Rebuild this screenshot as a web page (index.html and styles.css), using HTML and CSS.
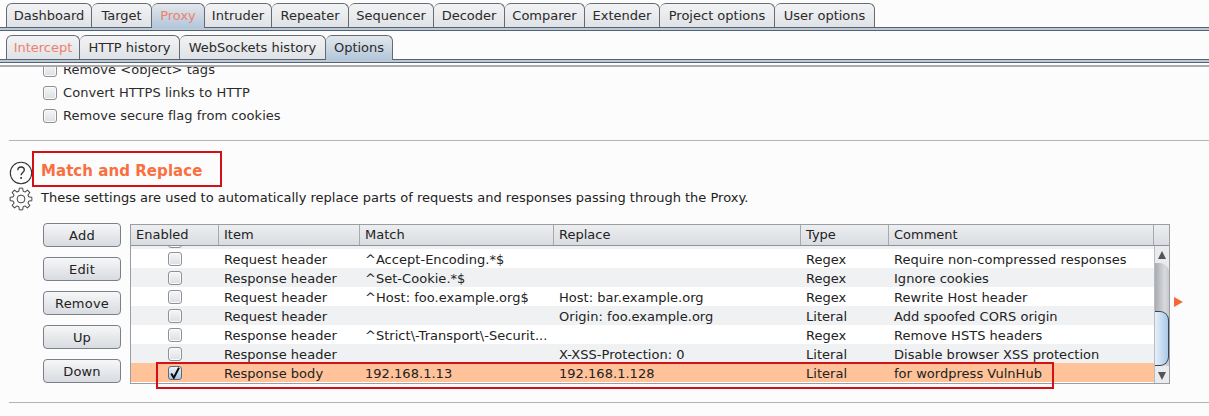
FILE: index.html
```html
<!DOCTYPE html>
<html lang="en">
<head>
<meta charset="utf-8">
<title>Burp Proxy Options</title>
<link rel="stylesheet" href="styles.css">
</head>
<body>
<div class="app">
  <nav class="tabbar top">
    <span class="tab w-dash">Dashboard</span><span class="tab w-target">Target</span><span class="tab active hot w-proxy">Proxy</span><span class="tab w-intr">Intruder</span><span class="tab w-rep">Repeater</span><span class="tab w-seq">Sequencer</span><span class="tab w-dec">Decoder</span><span class="tab w-comp">Comparer</span><span class="tab w-ext">Extender</span><span class="tab w-proj">Project options</span><span class="tab w-user">User options</span>
  </nav>
  <nav class="tabbar sub">
    <span class="tab hot w-int">Intercept</span><span class="tab w-http">HTTP history</span><span class="tab w-ws">WebSockets history</span><span class="tab active w-opt">Options</span>
  </nav>
  <main class="content">
    <div class="checks">
      <label class="check-row clipped"><span class="cb"></span>Remove &lt;object&gt; tags</label>
      <label class="check-row"><span class="cb"></span>Convert HTTPS links to HTTP</label>
      <label class="check-row"><span class="cb"></span>Remove secure flag from cookies</label>
    </div>
    <hr class="rule first">
    <section class="section">
      <div class="icons">
        <svg class="help" width="24" height="24" viewBox="0 0 24 24"><circle cx="12" cy="12" r="10.700" fill="none" stroke="#333" stroke-width="1.100"/><path d="M8.800 9.200c0-2 1.400-3.200 3.300-3.200s3.200 1.200 3.200 2.900c0 2.500-3.200 2.500-3.200 5.300" fill="none" stroke="#333" stroke-width="1.300"/><rect x="11.300" y="16" width="1.600" height="1.900" fill="#333"/></svg>
        <svg class="gear" width="24" height="24" viewBox="0 0 24 24">
          <defs><path id="tooth" d="M9.930 4.270L10.280 1.140H13.720L14.070 4.270A8 8 0 0 1 16 5.070" fill="none" stroke="#444" stroke-width="1" stroke-linejoin="round"/></defs>
          <use href="#tooth"/><use href="#tooth" transform="rotate(45 12 12)"/><use href="#tooth" transform="rotate(90 12 12)"/><use href="#tooth" transform="rotate(135 12 12)"/><use href="#tooth" transform="rotate(180 12 12)"/><use href="#tooth" transform="rotate(225 12 12)"/><use href="#tooth" transform="rotate(270 12 12)"/><use href="#tooth" transform="rotate(315 12 12)"/>
          <circle cx="12" cy="12" r="3.900" fill="none" stroke="#444" stroke-width="1"/>
        </svg>
      </div>
      <div class="section-body">
        <h2 class="title">Match and Replace</h2>
        <p class="desc">These settings are used to automatically replace parts of requests and responses passing through the Proxy.</p>
      </div>
    </section>
    <div class="editor">
      <div class="buttons">
        <button class="btn">Add</button>
        <button class="btn">Edit</button>
        <button class="btn">Remove</button>
        <button class="btn">Up</button>
        <button class="btn">Down</button>
      </div>
      <div class="table">
        <div class="grid head">
          <span>Enabled</span><span>Item</span><span>Match</span><span>Replace</span><span>Type</span><span>Comment</span><span class="corner"></span>
        </div>
        <div class="table-body">
          <div class="rows">
            <div class="sliver"><span class="cb sliver-cb"></span></div>
            <div class="grid row"><span class="cell-cb"><span class="cb"></span></span><span>Request header</span><span>^Accept-Encoding.*$</span><span></span><span>Regex</span><span>Require non-compressed responses</span></div>
            <div class="grid row alt"><span class="cell-cb"><span class="cb"></span></span><span>Response header</span><span>^Set-Cookie.*$</span><span></span><span>Regex</span><span>Ignore cookies</span></div>
            <div class="grid row"><span class="cell-cb"><span class="cb"></span></span><span>Request header</span><span>^Host: foo.example.org$</span><span>Host: bar.example.org</span><span>Regex</span><span>Rewrite Host header</span></div>
            <div class="grid row alt"><span class="cell-cb"><span class="cb"></span></span><span>Request header</span><span></span><span>Origin: foo.example.org</span><span>Literal</span><span>Add spoofed CORS origin</span></div>
            <div class="grid row"><span class="cell-cb"><span class="cb"></span></span><span>Response header</span><span>^Strict\-Transport\-Securit...</span><span></span><span>Regex</span><span>Remove HSTS headers</span></div>
            <div class="grid row alt"><span class="cell-cb"><span class="cb"></span></span><span>Response header</span><span></span><span>X-XSS-Protection: 0</span><span>Literal</span><span>Disable browser XSS protection</span></div>
            <div class="grid row selected"><span class="cell-cb"><span class="cb on"><svg class="tick" width="12" height="12" viewBox="0 0 12 12"><path d="M2.200 6.500L4.800 10.800L10 .8" fill="none" stroke="#0c0c0c" stroke-width="2"/></svg></span></span><span>Response body</span><span>192.168.1.13</span><span>192.168.1.128</span><span>Literal</span><span>for wordpress VulnHub</span></div>
          </div>
          <div class="scrollbar">
            <span class="arrow up"></span>
            <span class="track"><span class="thumb"></span></span>
            <span class="arrow down"></span>
          </div>
        </div>
      </div>
      <span class="expander"></span>
    </div>
    <hr class="rule last">
  </main>
  <div class="mark mark-title"></div>
  <div class="mark mark-row"></div>
</div>
</body>
</html>
```
FILE: styles.css
```css
* { box-sizing: border-box; }
html, body { margin: 0; padding: 0; }
body { background: #fcfcfc; font-family: "DejaVu Sans", sans-serif; font-size: 13px; color: #222; }
.app { position: relative; width: 1209px; height: 416px; overflow: hidden; }

.tabbar { display: flex; padding-left: 6px; background: #fcfcfc; border-bottom: 4px solid #b8c9db; position: relative; }
.tabbar::before { content: ""; position: absolute; left: 0; right: 0; bottom: -1px; height: 1px; background: #59616b; }
.tabbar::after { content: ""; position: absolute; left: 0; right: 0; bottom: -4px; height: 1px; background: #59616b; }
.tabbar.top { height: 31px; padding-top: 3px; }
.tabbar.sub { height: 32px; padding-top: 4px; }
.tab { display: flex; align-items: center; justify-content: center; height: 24px; flex: none; border: 1px solid #666b72; border-bottom: 0; border-left-width: 0; border-radius: 6px 6px 0 0; background: linear-gradient(#f2f3f5, #dfe2e6); color: #2a2a2a; position: relative; z-index: 1; }
.tab:first-child { border-left-width: 1px; }
.tab.active { height: 25px; padding-bottom: 1px; background: linear-gradient(#e2e7ec, #b3c6da); }
.tab.hot { color: #f0806c; }
.w-dash { width: 86px; } .w-target { width: 60px; } .w-proxy { width: 53px; } .w-intr { width: 67px; }
.w-rep { width: 77px; } .w-seq { width: 85px; } .w-dec { width: 71px; } .w-comp { width: 80px; }
.w-ext { width: 75px; } .w-proj { width: 115px; } .w-user { width: 100px; }
.w-int { width: 74px; } .w-http { width: 100px; } .w-ws { width: 146px; } .w-opt { width: 67px; }

.content { height: 353px; overflow: hidden; padding-left: 9px; border-top: 2px solid #a9abad; margin-top: 2px; }
.checks { margin-top: -9px; padding-left: 34px; }
.check-row { display: flex; align-items: center; gap: 6px; height: 23px; color: #2b2b2b; letter-spacing: .05px; }
.cb { display: inline-flex; align-items: center; justify-content: center; width: 14px; height: 14px; flex: none; border: 1px solid #8d9095; border-radius: 3px; background: linear-gradient(#f5f6f7, #dcdfe3); box-shadow: inset 0 0 0 1px #fafafa; }
.cb.on { background: linear-gradient(#eef3f8, #a9c8e6); border-color: #5e6a78; box-shadow: none; }
.tick { flex: none; }

.rule { border: 0; height: 1px; background: #b4b4b4; margin: 0; width: 1200px; }
.rule.first { margin-top: 13px; }
.rule.last { margin-top: 18px; }

.section { display: flex; margin-top: 20px; height: 52px; }
.icons { width: 32px; display: flex; flex-direction: column; gap: 2px; flex: none; }
.icons svg { flex: none; }
.title { margin: 0; font-size: 15px; font-weight: bold; color: #f96f3f; letter-spacing: .05px; line-height: 18px; height: 28px; padding-top: 1px; }
.desc { margin: 0; line-height: 18px; color: #222; }

.editor { display: flex; margin-top: 10px; position: relative; }
.buttons { padding-left: 34px; display: flex; flex-direction: column; gap: 10px; flex: none; box-sizing: content-box; width: 78px; padding-right: 9px; }
.btn { width: 78px; height: 24px; margin: 0; border: 1px solid #7c8188; border-radius: 4px; background: linear-gradient(#f6f7f8, #d8dbe0); font: 13px "DejaVu Sans", sans-serif; color: #222; letter-spacing: .2px; padding: 0; flex: none; }

.table { width: 1040px; height: 160px; margin-top: 1px; border: 1px solid #9a9da1; flex: none; }
.grid { display: grid; grid-template-columns: 88px 141px 194px 247px 88px 265px; align-items: center; }
.head { grid-template-columns: 88px 141px 194px 247px 88px 265px 1fr; height: 21px; background: linear-gradient(#eceef0, #d9dce1); border-bottom: 1px solid #8e9196; }
.head span { height: 100%; display: flex; align-items: center; padding-left: 5px; padding-bottom: 2px; border-right: 1px solid #a6a9ae; }
.head .corner { border-right: 0; }
.table-body { display: flex; height: 137px; overflow: hidden; }
.rows { width: 1023px; flex: none; background: #fff; margin-top: -1px; }
.sliver { height: 4px; background: #f0f1f2; overflow: hidden; padding-left: 37px; }
.sliver-cb { display: flex; margin-top: -11px; }
.row { height: 19px; background: #fff; }
.row.alt { background: #f0f1f2; }
.row.selected { background: #ffc299; }
.row span { padding-left: 5px; white-space: nowrap; overflow: hidden; line-height: 19px; height: 19px; padding-top: 1px; letter-spacing: .03px; }
.row .cell-cb { display: flex; justify-content: center; align-items: center; padding: 0; overflow: visible; }
.row .cell-cb .cb { padding: 0; height: 14px; line-height: 1; }

.scrollbar { flex: 1; display: flex; flex-direction: column; background: #e9ebee; border-left: 1px solid #b9bcc0; }
.arrow { height: 17px; flex: none; position: relative; }
.arrow::after { content: ""; position: absolute; left: 3px; border-left: 4px solid transparent; border-right: 4px solid transparent; }
.arrow.up::after { top: 5px; border-bottom: 8px solid #555; }
.arrow.down::after { top: 6px; border-top: 8px solid #555; }
.track { flex: 1; display: flex; flex-direction: column; justify-content: flex-end; background: linear-gradient(90deg, #a8abb1, #d8dadd 70%, #c6c8cc); border-radius: 0 9px 0 0; }
.thumb { height: 55px; background: linear-gradient(90deg, #e6f0f9, #a9c9e8); border: 1px solid #3a4654; border-left: 0; border-radius: 0 9px 9px 0; }

.expander { position: absolute; left: 1165px; top: 74px; border-left: 9px solid #f4683a; border-top: 5px solid transparent; border-bottom: 5px solid transparent; }

.mark { position: absolute; border: 2px solid #d40f16; }
.mark-title { left: 32px; top: 151px; width: 190px; height: 36px; }
.mark-row { left: 156px; top: 362px; width: 898px; height: 27px; }
```
